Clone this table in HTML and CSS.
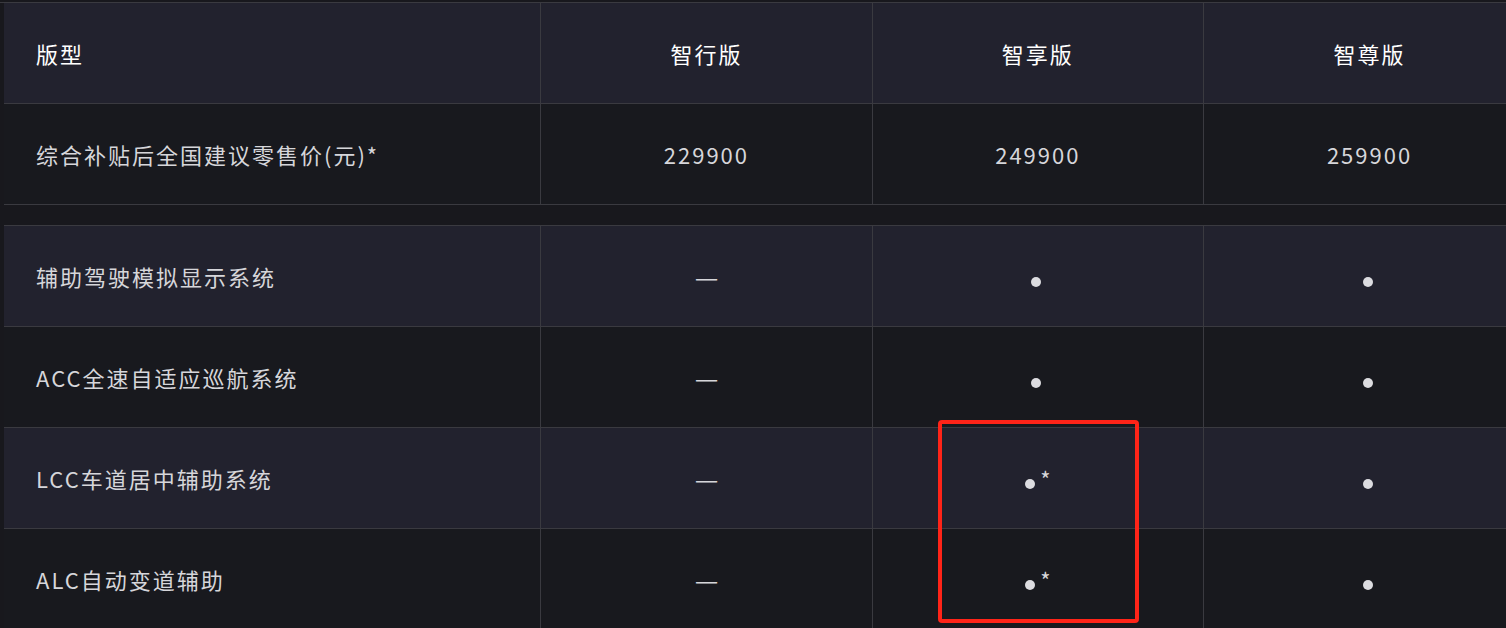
FILE: index.html
```html
<!DOCTYPE html>
<html>
<head>
  <meta charset="UTF-8">
  <title>配置表</title>
  <link rel="stylesheet" href="styles.css">
</head>
<body>
  <div class="wrap">
    <table class="spec">
      <colgroup>
        <col class="col-name">
        <col class="col-ver">
        <col class="col-ver">
        <col class="col-ver">
      </colgroup>
      <thead>
        <tr class="row-light">
          <th class="name">版型</th>
          <th>智行版</th>
          <th>智享版</th>
          <th>智尊版</th>
        </tr>
      </thead>
      <tbody>
        <tr class="row-dark">
          <td class="name">综合补贴后全国建议零售价(元)*</td>
          <td>229900</td>
          <td>249900</td>
          <td>259900</td>
        </tr>
        <tr class="gap"><td colspan="4"></td></tr>
        <tr class="row-light">
          <td class="name">辅助驾驶模拟显示系统</td>
          <td><span class="dash">—</span></td>
          <td><span class="dot"></span></td>
          <td><span class="dot"></span></td>
        </tr>
        <tr class="row-dark">
          <td class="name">ACC全速自适应巡航系统</td>
          <td><span class="dash">—</span></td>
          <td><span class="dot"></span></td>
          <td><span class="dot"></span></td>
        </tr>
        <tr class="row-light">
          <td class="name">LCC车道居中辅助系统</td>
          <td><span class="dash">—</span></td>
          <td><span class="dot note"></span><span class="star">*</span></td>
          <td><span class="dot"></span></td>
        </tr>
        <tr class="row-dark">
          <td class="name">ALC自动变道辅助</td>
          <td><span class="dash">—</span></td>
          <td><span class="dot note"></span><span class="star">*</span></td>
          <td><span class="dot"></span></td>
        </tr>
      </tbody>
    </table>
    <div class="mark"></div>
  </div>
</body>
</html>
```

FILE: styles.css
```css
/* Reset & page */
* { box-sizing: border-box; }
html, body {
  margin: 0;
  padding: 0;
  background: #18181d;
  overflow: hidden;
}
body {
  padding-top: 2px;
  font-family: "Noto Sans CJK SC", "Noto Sans", sans-serif;
}
.wrap {
  position: relative;
  border-top: 1px solid #3a3a40;
  width: 1506px;
  height: 626px;
  overflow: hidden;
}

/* Spec table */
.spec {
  margin-left: 4px;
  width: 1531px;
  border-collapse: collapse;
  table-layout: fixed;
}
.col-name { width: 536px; }
.col-ver { width: 331px; }
.spec th,
.spec td {
  height: 101px;
  padding: 0;
  text-align: center;
  vertical-align: middle;
  font-size: 22px;
  letter-spacing: 2px;
  border-bottom: 1px solid #3a3a40;
  border-left: 1px solid #3a3a40;
  color: #d6d6da;
  font-weight: 400;
}
.spec th {
  height: 100px;
  color: #fff;
  font-weight: 400;
}
.spec .name {
  text-align: left;
  padding-left: 32px;
  border-left: none;
}
.row-light { background: #22222e; }
.row-dark { background: #18191e; }
.spec .gap td {
  height: 21px;
  border-left: none;
  background: #18181d;
}

/* Marks */
.dash {
  display: inline-block;
  transform: scaleX(1.2);
  margin-right: -2px;
}
.dot {
  display: inline-block;
  width: 10px;
  height: 10px;
  border-radius: 50%;
  background: #dcdce0;
  vertical-align: -1px;
  margin-right: 4px;
}
.dot.note { margin-right: 5px; }
.star {
  letter-spacing: 0;
}

/* Red annotation box */
.mark {
  position: absolute;
  left: 938px;
  top: 417px;
  width: 201px;
  height: 203px;
  border: 4px solid #ff2418;
  border-radius: 4px;
}
```
